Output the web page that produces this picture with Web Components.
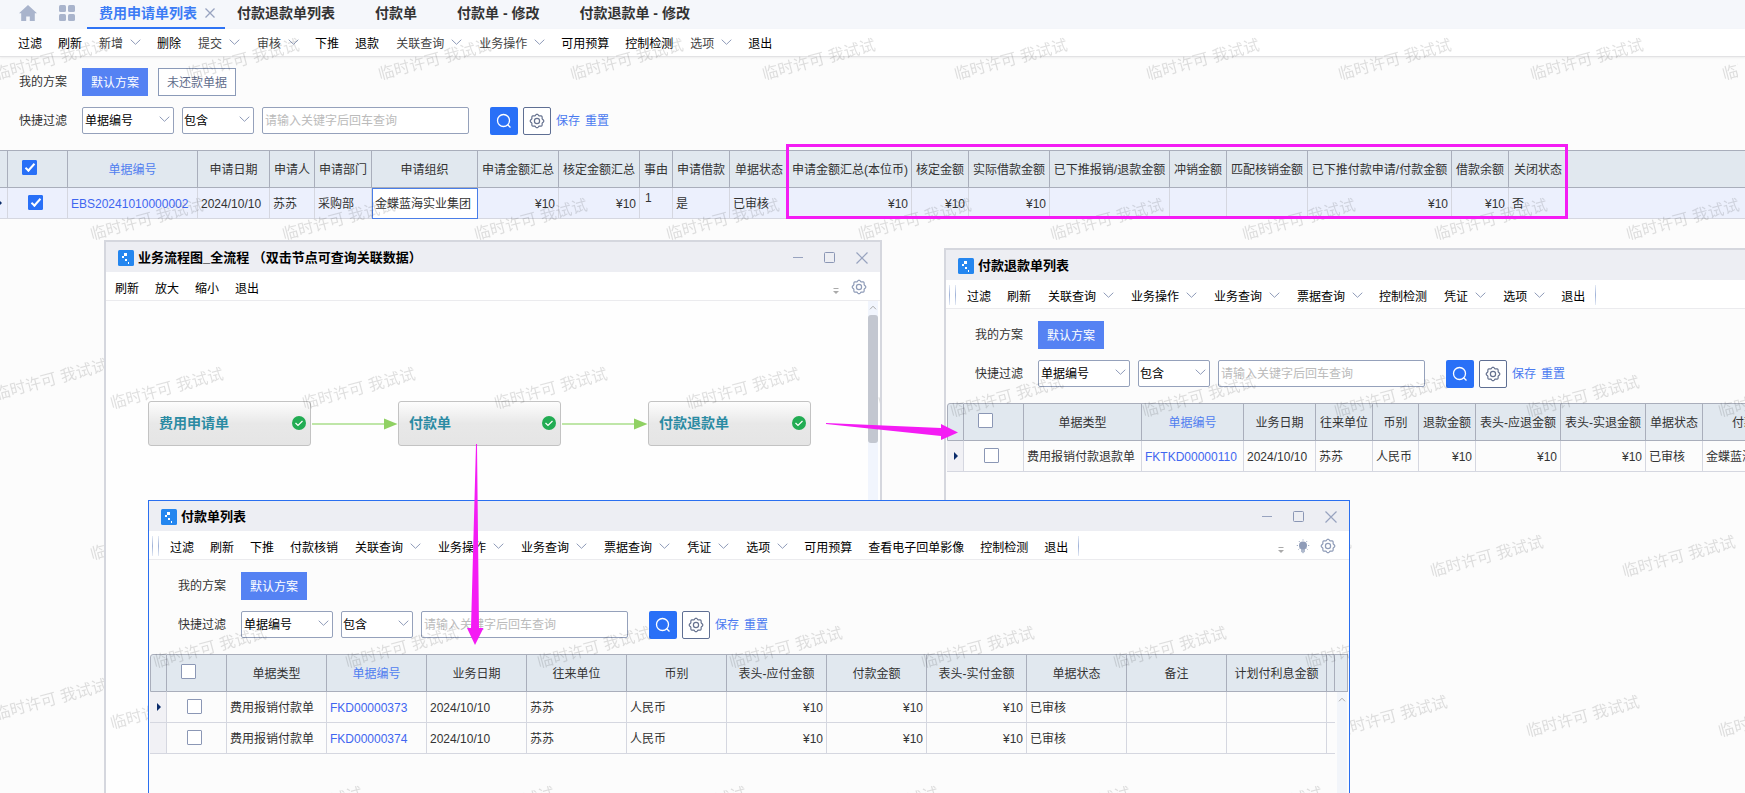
<!DOCTYPE html>
<html lang="zh-CN">
<head>
<meta charset="utf-8">
<title>费用申请单列表</title>
<style>
  html, body {
    margin: 0;
    height: 100%;
  }

  body {
    overflow: hidden;
    font: 12px/16px "Liberation Sans", "Noto Sans CJK SC", sans-serif;
    color: #333;
    background: #fcfcfc;
  }
</style>
</head>
<body>
<erp-desktop></erp-desktop>

<script>
// outline of a cog with eight soft teeth in a 16x16 box
function gearPath() {
  let d = '';
  for (let i = 0; i < 64; i++) {
    const a = (i / 64) * Math.PI * 2;
    const r = 6.2 + 0.6 * Math.cos(a * 8);
    d += `${i ? 'L' : 'M'}${(8 + r * Math.cos(a)).toFixed(2)} ${(8 + r * Math.sin(a)).toFixed(2)}`;
  }
  return d + 'z';
}

const ICONS = {
  home: '<svg viewBox="0 0 18 16" width="18" height="16"><path d="M9 0l9 8.2h-2.2V16h-5v-4.6H7.2V16h-5V8.2H0z" fill="#a9b4cc"/></svg>',
  apps: '<svg viewBox="0 0 16 16" width="16" height="16" fill="#a9b4cc"><rect width="7" height="7" rx="1.5"/><rect x="9" width="7" height="7" rx="1.5"/><rect y="9" width="7" height="7" rx="1.5"/><rect x="9" y="9" width="7" height="7" rx="1.5"/></svg>',
  cross: '<svg viewBox="0 0 10 10" width="10" height="10"><path d="M.5.5l9 9M9.5.5l-9 9" stroke="#98a3bf" stroke-width="1.3" fill="none"/></svg>',
  chevron: '<svg viewBox="0 0 11 6" width="11" height="6"><path d="M.7.7l4.8 4.6L10.3.7" stroke="#8e9ab8" fill="none"/></svg>',
  search: '<svg viewBox="0 0 16 16" width="16" height="16"><circle cx="7.5" cy="7.5" r="6" stroke="#fff" stroke-width="1.3" fill="none"/><path d="M11.7 11.7l2.8 2.8" stroke="#fff" stroke-width="1.3"/></svg>',
  gear: `<svg viewBox="0 0 16 16" width="16" height="16" fill="none" stroke="currentColor" stroke-width="1.2"><path d="${gearPath()}"/><circle cx="8" cy="8" r="2.6"/></svg>`,
  bulb: '<svg viewBox="0 0 14 16" width="14" height="16" fill="#8f9cb8"><circle cx="7" cy="7.5" r="4"/><path d="M5 11h4v2.500L7 15.500l-2-2z" opacity=".7"/><path d="M7 1.500v1M2.800 3l.8.8M11.200 3l-.8.8M.8 7.500h1M12.200 7.500h1M2.500 11.500l.8-.8M11.500 11.500l-.8-.8" stroke="#8f9cb8"/></svg>',
  overflow: '<svg viewBox="0 0 6 6" width="6" height="6"><path d="M.5.5h5" stroke="#aaa"/><path d="M0 3h6L3 6z" fill="#aaa"/></svg>',
  minimize: '<svg viewBox="0 0 12 12" width="12" height="12"><path d="M1 5.5h10" stroke="#98a3bf"/></svg>',
  maximize: '<svg viewBox="0 0 12 12" width="12" height="12"><rect x=".5" y=".5" width="10" height="10" rx="1" stroke="#8b97b5" fill="none"/></svg>',
  close: '<svg viewBox="0 0 12 12" width="12" height="12"><path d="M.5.5l11 11M11.5.5l-11 11" stroke="#98a3bf" stroke-width="1.2"/></svg>',
  scrollUp: '<svg viewBox="0 0 8 5" width="8" height="5"><path d="M1 4.3L4 1.2l3 3.1" stroke="#aaa" fill="none"/></svg>',
  logo: '<svg viewBox="0 0 16 16" width="16" height="16"><rect width="16" height="16" rx="1.5" fill="#2486ef"/><path d="M6 3h3v3H6zM4 6h2v2H4zM7 9h2v2H7zM10 12h1v2h-1z" fill="#fff"/></svg>',
  done: '<svg viewBox="0 0 14 14" width="14" height="14"><circle cx="7" cy="7" r="7" fill="#22ac53"/><path d="M3.5 7l2.5 2.5L10.5 5" stroke="#fff" stroke-width="1.2" fill="none"/></svg>',
};

// width and title of each column; key "mark" is the row indicator, "check" the tick box
const GRIDS = {
  expense: {
    cols: [
      [8, '', 'mark'], [60, '', 'check'], [130, '单据编号', 'link'], [72, '申请日期'], [45, '申请人'],
      [57, '申请部门'], [106, '申请组织', 'focus'], [81, '申请金额汇总', 'num'], [81, '核定金额汇总', 'num'],
      [33, '事由', 'top'], [57, '申请借款'], [59, '单据状态'], [123, '申请金额汇总(本位币)', 'num'],
      [57, '核定金额', 'num'], [81, '实际借款金额', 'num'], [120, '已下推报销/退款金额', 'num'],
      [57, '冲销金额', 'num'], [81, '匹配核销金额', 'num'], [144, '已下推付款申请/付款金额', 'num'],
      [57, '借款余额', 'num'], [59, '关闭状态'], [0, '', 'rest'],
    ],
    rows: [
      ['EBS20241010000002', '2024/10/10', '苏苏', '采购部', '金蝶蓝海实业集团', '¥10', '¥10', '1', '是', '已审核',
        '¥10', '¥10', '¥10', '', '', '', '¥10', '¥10', '否', ''],
    ],
    checked: true,
  },
  refund: {
    cols: [
      [17, '', 'mark'], [60, '', 'check'], [118, '单据类型'], [102, '单据编号', 'link'], [72, '业务日期'],
      [57, '往来单位'], [46, '币别'], [57, '退款金额', 'num'], [85, '表头-应退金额', 'num'],
      [85, '表头-实退金额', 'num'], [57, '单据状态'], [107, '付款组织'], [0, '', 'rest'],
    ],
    rows: [
      ['费用报销付款退款单', 'FKTKD00000110', '2024/10/10', '苏苏', '人民币', '¥10', '¥10', '¥10', '已审核', '金蝶蓝海实业集团', ''],
    ],
  },
  payment: {
    cols: [
      [17, '', 'mark'], [60, '', 'check'], [100, '单据类型'], [100, '单据编号', 'link'], [100, '业务日期'],
      [100, '往来单位'], [100, '币别'], [100, '表头-应付金额', 'num'], [100, '付款金额', 'num'],
      [100, '表头-实付金额', 'num'], [100, '单据状态'], [100, '备注'], [100, '计划付利息金额', 'num'],
      [0, '', 'rest'], [13, '', 'bar'],
    ],
    rows: [
      ['费用报销付款单', 'FKD00000373', '2024/10/10', '苏苏', '人民币', '¥10', '¥10', '¥10', '已审核', '', '', '', ''],
      ['费用报销付款单', 'FKD00000374', '2024/10/10', '苏苏', '人民币', '¥10', '¥10', '¥10', '已审核', '', '', '', ''],
    ],
    scroll: true,
  },
};

class BaseElement extends HTMLElement {
  constructor() {
    super();
    this.attachShadow({ mode: 'open' });
  }

  connectedCallback() {
    this.shadowRoot.innerHTML = `
      <style>
        *, *::before, *::after { box-sizing: border-box; }
        button, input, select { font: inherit; margin: 0; }
        svg { display: block; flex: none; }
      </style>
      ${this.template()}
    `;
  }
}

class TabBar extends BaseElement {
  template() {
    return `
      <style>
        :host {
          display: block;
          background: #f5f7fb;
        }
        nav {
          display: flex;
          height: 29px;
          padding-left: 19px;
        }
        button {
          border: 0;
          background: none;
          padding: 0;
          white-space: nowrap;
          color: #333;
        }
        .icon {
          display: flex;
          align-items: center;
          width: 40px;
          padding-bottom: 3px;
        }
        .icon:nth-child(2) {
          width: 28px;
        }
        .tab {
          font-size: 14px;
          font-weight: bold;
          padding: 0 28px 4px 12px;
        }
        .active {
          display: flex;
          align-items: center;
          gap: 8px;
          padding: 0 10px 2px 12px;
          color: #3c7cf5;
          border-bottom: 2px solid #2f74f5;
        }
      </style>
      <nav>
        <button class="icon" aria-label="首页">${ICONS.home}</button>
        <button class="icon" aria-label="应用">${ICONS.apps}</button>
        <button class="tab active">费用申请单列表 ${ICONS.cross}</button>
        <button class="tab">付款退款单列表</button>
        <button class="tab">付款单</button>
        <button class="tab">付款单 - 修改</button>
        <button class="tab">付款退款单 - 修改</button>
      </nav>
    `;
  }
}

class ToolItem extends BaseElement {
  template() {
    return `
      <style>
        :host {
          display: block;
          flex: none;
        }
        button {
          display: flex;
          align-items: center;
          gap: 7px;
          padding: 0;
          border: 0;
          background: none;
          color: #000;
          white-space: nowrap;
        }
        svg {
          margin-bottom: 4px;
        }
        :host([menu]) button {
          padding-left: 1px;
          color: var(--menu-color, #000);
        }
      </style>
      <button><slot></slot>${this.hasAttribute('menu') ? ICONS.chevron : ''}</button>
    `;
  }
}

// items is a space separated list, a trailing "+" marks a drop-down
class ToolBar extends BaseElement {
  template() {
    const items = this.getAttribute('items').split(' ').map((item) => {
      const menu = item.endsWith('+');
      return `<tool-item${menu ? ' menu' : ''}>${item.replace('+', '')}</tool-item>`;
    });
    return `
      <style>
        :host {
          display: flex;
          align-items: center;
          gap: 16px;
          height: 29px;
          box-sizing: border-box;
          padding: 5px 13px 0 9px;
          background: #fff;
          border-bottom: 1px solid #ebebee;
        }
        :host([main]) {
          height: 28px;
          padding: 2px 18px 0;
          border-color: #e2e2e4;
          box-shadow: 0 1px 2px rgba(0, 0, 0, .06);
        }
        i {
          width: 1px;
          height: 20px;
          margin-bottom: 3px;
          background: linear-gradient(#e4eaf5, #9fb2d8, #e4eaf5);
        }
        .grip {
          display: flex;
          gap: 5px;
          margin-left: -6px;
          margin-right: -5px;
        }
        .extra {
          display: flex;
          align-items: center;
          gap: 10px;
          margin-left: auto;
          padding-bottom: 4px;
          color: #8f9cb8;
        }
        .extra svg:first-child {
          margin: 9px 2px 0 0;
        }
        i.end {
          margin-left: -6px;
        }
      </style>
      ${this.hasAttribute('grip') ? '<span class="grip"><i></i><i></i></span>' : ''}
      ${items.join('')}
      ${this.hasAttribute('grip') ? '<i class="end"></i>' : ''}
      ${this.hasAttribute('extra') ? `<span class="extra">${this.getAttribute('extra').split(' ').map((name) => ICONS[name]).join('')}</span>` : ''}
    `;
  }
}

class FilterPanel extends BaseElement {
  template() {
    const schemes = this.getAttribute('schemes').split(' ');
    return `
      <style>
        :host {
          display: flex;
          flex-direction: column;
          gap: 11px;
          padding: 12px 0 16px 29px;
        }
        :host([main]) {
          padding: 11px 0 16px 19px;
        }
        .row {
          display: flex;
          align-items: center;
        }
        .name {
          width: 63px;
          flex: none;
        }
        .scheme {
          height: 28px;
          padding: 1px 8px 0;
          margin-right: 10px;
          border: 1px solid #8b9ab8;
          background: #fff;
          color: #5f6d8c;
          white-space: nowrap;
        }
        .scheme.on {
          width: 66px;
          border: 0;
          background: #5582f3;
          color: #fff;
        }
        .pick {
          display: grid;
          align-items: center;
          margin-right: 8px;
        }
        .pick > * {
          grid-area: 1 / 1;
        }
        .pick svg {
          justify-self: end;
          margin: 0 4px 3px 0;
          pointer-events: none;
        }
        select, input {
          height: 27px;
          border: 1px solid #95a1bb;
          border-radius: 2px;
          background: #fff;
          color: #000;
          outline: 0;
        }
        select {
          appearance: none;
          width: 92px;
          padding: 1px 0 0 2px;
        }
        select.short {
          width: 72px;
          padding-left: 1px;
        }
        input {
          width: 207px;
          padding: 1px 2px 0;
        }
        input::placeholder {
          color: #bbb;
        }
        .icon {
          display: flex;
          align-items: center;
          justify-content: center;
          width: 28px;
          height: 28px;
          padding: 0;
          border: 1px solid #5f6f93;
          border-radius: 2px;
          background: #fff;
          color: #66728f;
          margin-right: 5px;
        }
        .go {
          margin-left: 21px;
          border: 0;
          background: #2970f7;
        }
        .filters {
          height: 27px;
        }
        a, .filters .name {
          padding-top: 1px;
        }
        a {
          color: #4a7af0;
          text-decoration: none;
          margin-right: 5px;
        }
      </style>
      <div class="row">
        <span class="name">我的方案</span>
        ${schemes.map((name, i) => `<button class="scheme${i ? '' : ' on'}">${name}</button>`).join('')}
      </div>
      <div class="row filters">
        <label class="name" for="field">快捷过滤</label>
        <span class="pick"><select id="field"><option>单据编号</option></select>${ICONS.chevron}</span>
        <span class="pick"><select class="short" aria-label="条件"><option>包含</option></select>${ICONS.chevron}</span>
        <input type="text" placeholder="请输入关键字后回车查询" aria-label="关键字">
        <button class="icon go" aria-label="查询">${ICONS.search}</button>
        <button class="icon" aria-label="设置">${ICONS.gear}</button>
        <a href="#">保存</a>
        <a href="#">重置</a>
      </div>
    `;
  }
}

class DataGrid extends BaseElement {
  get grid() {
    return GRIDS[this.getAttribute('name')];
  }

  cell(row, col, index, rowIndex) {
    const kind = col[2] || '';
    if (kind === 'mark') return `<td class="mark">${rowIndex ? '' : '<i></i>'}</td>`;
    if (kind === 'check') {
      return `<td class="check"><input type="checkbox" aria-label="选择" ${this.grid.checked ? 'checked' : ''}></td>`;
    }
    const text = row[index - 2];
    return `<td class="${kind}">${kind === 'link' ? `<a href="#">${text}</a>` : text}</td>`;
  }

  template() {
    const { cols, rows, checked, scroll } = this.grid;
    return `
      <style>
        :host {
          display: block;
          position: relative;
          overflow: hidden;
          flex: ${scroll ? '1' : 'none'};
          margin: 0 1px;
        }
        :host([main]) {
          margin: 0;
        }
        table {
          width: 100%;
          table-layout: fixed;
          border-spacing: 0;
        }
        th, td {
          padding: 1px 3px 0;
          white-space: nowrap;
          overflow: hidden;
          text-align: left;
        }
        th {
          height: 38px;
          padding: 1px 0 0;
          font-weight: normal;
          text-align: center;
          background: #e1e8ef;
          border: 1px solid #a9aebb;
          border-left: 0;
        }
        th.mark {
          border-left: 1px solid #a9aebb;
          border-top-left-radius: 3px;
        }
        th.link {
          color: #4f7df0;
        }
        td {
          height: 31px;
          border-right: 1px solid #d5d7e0;
          border-bottom: 1px solid #d5d7e0;
        }
        td.rest {
          border-right: 0;
        }
        td.bar {
          border: 0;
        }
        td.num {
          text-align: right;
        }
        td.top {
          vertical-align: top;
          padding: 2px 4px 0 5px;
        }
        td.mark {
          padding: 0;
          background: #f1f1f5;
        }
        td.mark i {
          display: block;
          width: 4px;
          margin-left: 7px;
          border: 4px solid transparent;
          border-width: 4px 0 4px 4px;
          border-left-color: #0b2c6b;
        }
        th.check, td.check {
          text-align: left;
          padding: 0 0 3px 14px;
        }
        td.check {
          padding: 0 0 1px 20px;
        }
        a {
          color: #3f66f0;
          text-decoration: none;
        }
        input {
          display: block;
          appearance: none;
          width: 15px;
          height: 15px;
          border: 1px solid #8b97b5;
          border-radius: 1px;
          background: #fff;
        }
        input:checked {
          border-color: #2970f7;
          background: #2970f7;
        }
        input:checked::before {
          content: '';
          display: block;
          width: 10px;
          height: 5px;
          margin: 3px 0 0 2px;
          border: solid #fff;
          border-width: 0 0 2px 2px;
          transform: rotate(-48deg);
        }
        .scroll {
          position: absolute;
          top: 38px;
          right: 1px;
          bottom: 0;
          display: flex;
          justify-content: center;
          width: 10px;
          padding-top: 5px;
          background: #f2f5fa;
        }
        :host([main]) th.mark {
          border-left: 0;
          border-radius: 0;
        }
        :host([main]) th.rest {
          border-right: 0;
        }
        :host([main]) td {
          background: #ecf0fd;
        }
        :host([main]) td.focus {
          background: #fff;
          border: 1px solid #4a7ee8;
          padding-left: 2px;
        }
        :host([main]) td.mark i {
          margin-left: -2px;
        }
      </style>
      <table>
        <colgroup>${cols.map(([width]) => `<col${width ? ` style="width: ${width}px"` : ''}>`).join('')}</colgroup>
        <thead>
          <tr>${cols.map(([, title, kind = '']) => `<th class="${kind}">${kind === 'check' ? `<input type="checkbox" aria-label="全选" ${checked ? 'checked' : ''}>` : title}</th>`).join('')}</tr>
        </thead>
        <tbody>
          ${rows.map((row, r) => `<tr>${cols.map((col, i) => this.cell(row, col, i, r)).join('')}</tr>`).join('')}
        </tbody>
      </table>
      ${scroll ? `<div class="scroll">${ICONS.scrollUp}</div>` : ''}
    `;
  }
}

// licence text in staggered rows, x and y place the first one
class WaterMark extends BaseElement {
  tile(id, x, y) {
    return `
      <pattern id="${id}" x="${x}" y="${y}" width="192" height="320" patternUnits="userSpaceOnUse">
        <text transform="translate(3 43) rotate(-15)">临时许可 我试试</text>
      </pattern>
      <rect x="${x}" width="100%" height="100%" fill="url(#${id})"/>
    `;
  }

  template() {
    const x = Number(this.getAttribute('x'));
    const y = Number(this.getAttribute('y'));
    return `
      <style>
        :host {
          position: absolute;
          inset: 0;
          pointer-events: none;
          overflow: hidden;
        }
        text {
          font: 16px "Liberation Sans", "Noto Sans CJK SC", sans-serif;
          fill: rgba(0, 0, 0, .12);
        }
      </style>
      <svg width="100%" height="100%" aria-hidden="true">
        ${this.tile('odd', x, y)}
        ${this.tile('even', x + 96, y + 160)}
      </svg>
    `;
  }
}

class AppWindow extends BaseElement {
  template() {
    const controls = this.hasAttribute('controls') ? `
      <span class="controls">
        <button aria-label="最小化">${ICONS.minimize}</button>
        <button aria-label="最大化">${ICONS.maximize}</button>
        <button aria-label="关闭">${ICONS.close}</button>
      </span>` : '';
    return `
      <style>
        :host {
          position: absolute;
          display: flex;
          flex-direction: column;
          box-sizing: border-box;
          border: 2px solid #d5d7de;
          border-bottom: 0;
          background: #fcfcfc;
        }
        :host([active]) {
          border: 1px solid #2a6ff0;
          border-bottom: 0;
        }
        header {
          display: flex;
          align-items: center;
          gap: 4px;
          height: 30px;
          flex: none;
          padding: 1px 12px 0;
          background: #edeef3;
          color: #000;
          font-size: 13px;
          font-weight: bold;
        }
        .controls {
          display: flex;
          gap: 20px;
          margin-left: auto;
        }
        .controls button {
          padding: 0;
          border: 0;
          background: none;
        }
        .body {
          position: relative;
          display: flex;
          flex-direction: column;
          flex: 1;
          min-height: 0;
          overflow: hidden;
        }
      </style>
      <header>${ICONS.logo}<span>${this.getAttribute('label')}</span>${controls}</header>
      <div class="body">
        <slot></slot>
        <water-mark x="3" y="94"></water-mark>
      </div>
    `;
  }
}

class FlowNode extends BaseElement {
  template() {
    return `
      <style>
        :host {
          display: flex;
          align-items: center;
          justify-content: space-between;
          box-sizing: border-box;
          width: 163px;
          height: 45px;
          flex: none;
          padding: 0 4px 1px 10px;
          border: 1px solid #c3c3c3;
          border-radius: 3px;
          background: linear-gradient(#fdfdfd, #e8e8e8 50%, #e5e5e5);
          color: #2b8ba3;
          font-size: 14px;
          font-weight: bold;
        }
      </style>
      <slot></slot>${ICONS.done}
    `;
  }
}

class FlowChart extends BaseElement {
  template() {
    const link = '<svg viewBox="0 0 87 12" width="87" height="12"><path d="M1 6h73" stroke="#bfe6a8" stroke-width="2"/><path d="M73 .5v11L86.500 6z" fill="#90d163"/></svg>';
    return `
      <style>
        :host {
          display: flex;
          flex: 1;
          background: #fefefe;
        }
        .flow {
          flex: 1;
          display: flex;
          align-items: center;
          height: 45px;
          margin-top: 100px;
          padding-left: 42px;
        }
        .bar {
          display: flex;
          flex-direction: column;
          align-items: center;
          gap: 5px;
          width: 10px;
          margin-right: 2px;
          padding-top: 4px;
          background: #f1f5fd;
        }
        .thumb {
          width: 10px;
          height: 128px;
          border-radius: 3px;
          background: #c3c7d0;
        }
      </style>
      <div class="flow">
        <flow-node>费用申请单</flow-node>${link}<flow-node>付款单</flow-node>${link}<flow-node>付款退款单</flow-node>
      </div>
      <div class="bar">${ICONS.scrollUp}<div class="thumb"></div></div>
    `;
  }
}

class ErpDesktop extends BaseElement {
  template() {
    return `
      <style>
        :host {
          display: flex;
          flex-direction: column;
          position: relative;
          height: 100vh;
          overflow: hidden;
        }
        main {
          position: relative;
          flex: 1;
        }
        .flow {
          left: 104px;
          top: 240px;
          bottom: 0;
          width: 778px;
        }
        .refund {
          left: 944px;
          top: 248px;
          bottom: 0;
          right: -96px;
        }
        .payment {
          left: 148px;
          top: 500px;
          bottom: 0;
          width: 1202px;
        }
        .notes {
          position: absolute;
          left: 0;
          top: 0;
          pointer-events: none;
        }
      </style>
      <tab-bar></tab-bar>
      <main>
        <tool-bar main style="--menu-color: #444"
          items="过滤 刷新 新增+ 删除 提交+ 审核+ 下推 退款 关联查询+ 业务操作+ 可用预算 控制检测 选项+ 退出"></tool-bar>
        <filter-panel main schemes="默认方案 未还款单据"></filter-panel>
        <data-grid main name="expense"></data-grid>
        <water-mark x="-7" y="8"></water-mark>
      </main>
      <app-window class="flow" label="业务流程图_全流程 （双击节点可查询关联数据）" controls>
        <tool-bar items="刷新 放大 缩小 退出" extra="overflow gear"></tool-bar>
        <flow-chart></flow-chart>
      </app-window>
      <app-window class="refund" label="付款退款单列表">
        <tool-bar grip items="过滤 刷新 关联查询+ 业务操作+ 业务查询+ 票据查询+ 控制检测 凭证+ 选项+ 退出"></tool-bar>
        <filter-panel schemes="默认方案"></filter-panel>
        <data-grid name="refund"></data-grid>
      </app-window>
      <app-window class="payment" label="付款单列表" controls active>
        <tool-bar grip extra="overflow bulb gear"
          items="过滤 刷新 下推 付款核销 关联查询+ 业务操作+ 业务查询+ 票据查询+ 凭证+ 选项+ 可用预算 查看电子回单影像 控制检测 退出"></tool-bar>
        <filter-panel schemes="默认方案"></filter-panel>
        <data-grid name="payment"></data-grid>
      </app-window>
      <svg class="notes" width="1745" height="793" fill="#f41cf4" aria-hidden="true">
        <rect x="787.500" y="145.500" width="779" height="72" fill="none" stroke="#f41cf4" stroke-width="3"/>
        <path d="M826 423l115 5v-4l17 8.500-17 7.500v-4l-115-12z"/>
        <path d="M476 444h1l2 184h4.500l-8.500 17-8-17h4z"/>
      </svg>
    `;
  }
}

customElements.define('tool-item', ToolItem);
customElements.define('tab-bar', TabBar);
customElements.define('tool-bar', ToolBar);
customElements.define('filter-panel', FilterPanel);
customElements.define('data-grid', DataGrid);
customElements.define('water-mark', WaterMark);
customElements.define('app-window', AppWindow);
customElements.define('flow-node', FlowNode);
customElements.define('flow-chart', FlowChart);
customElements.define('erp-desktop', ErpDesktop);
</script>
</body>
</html>
